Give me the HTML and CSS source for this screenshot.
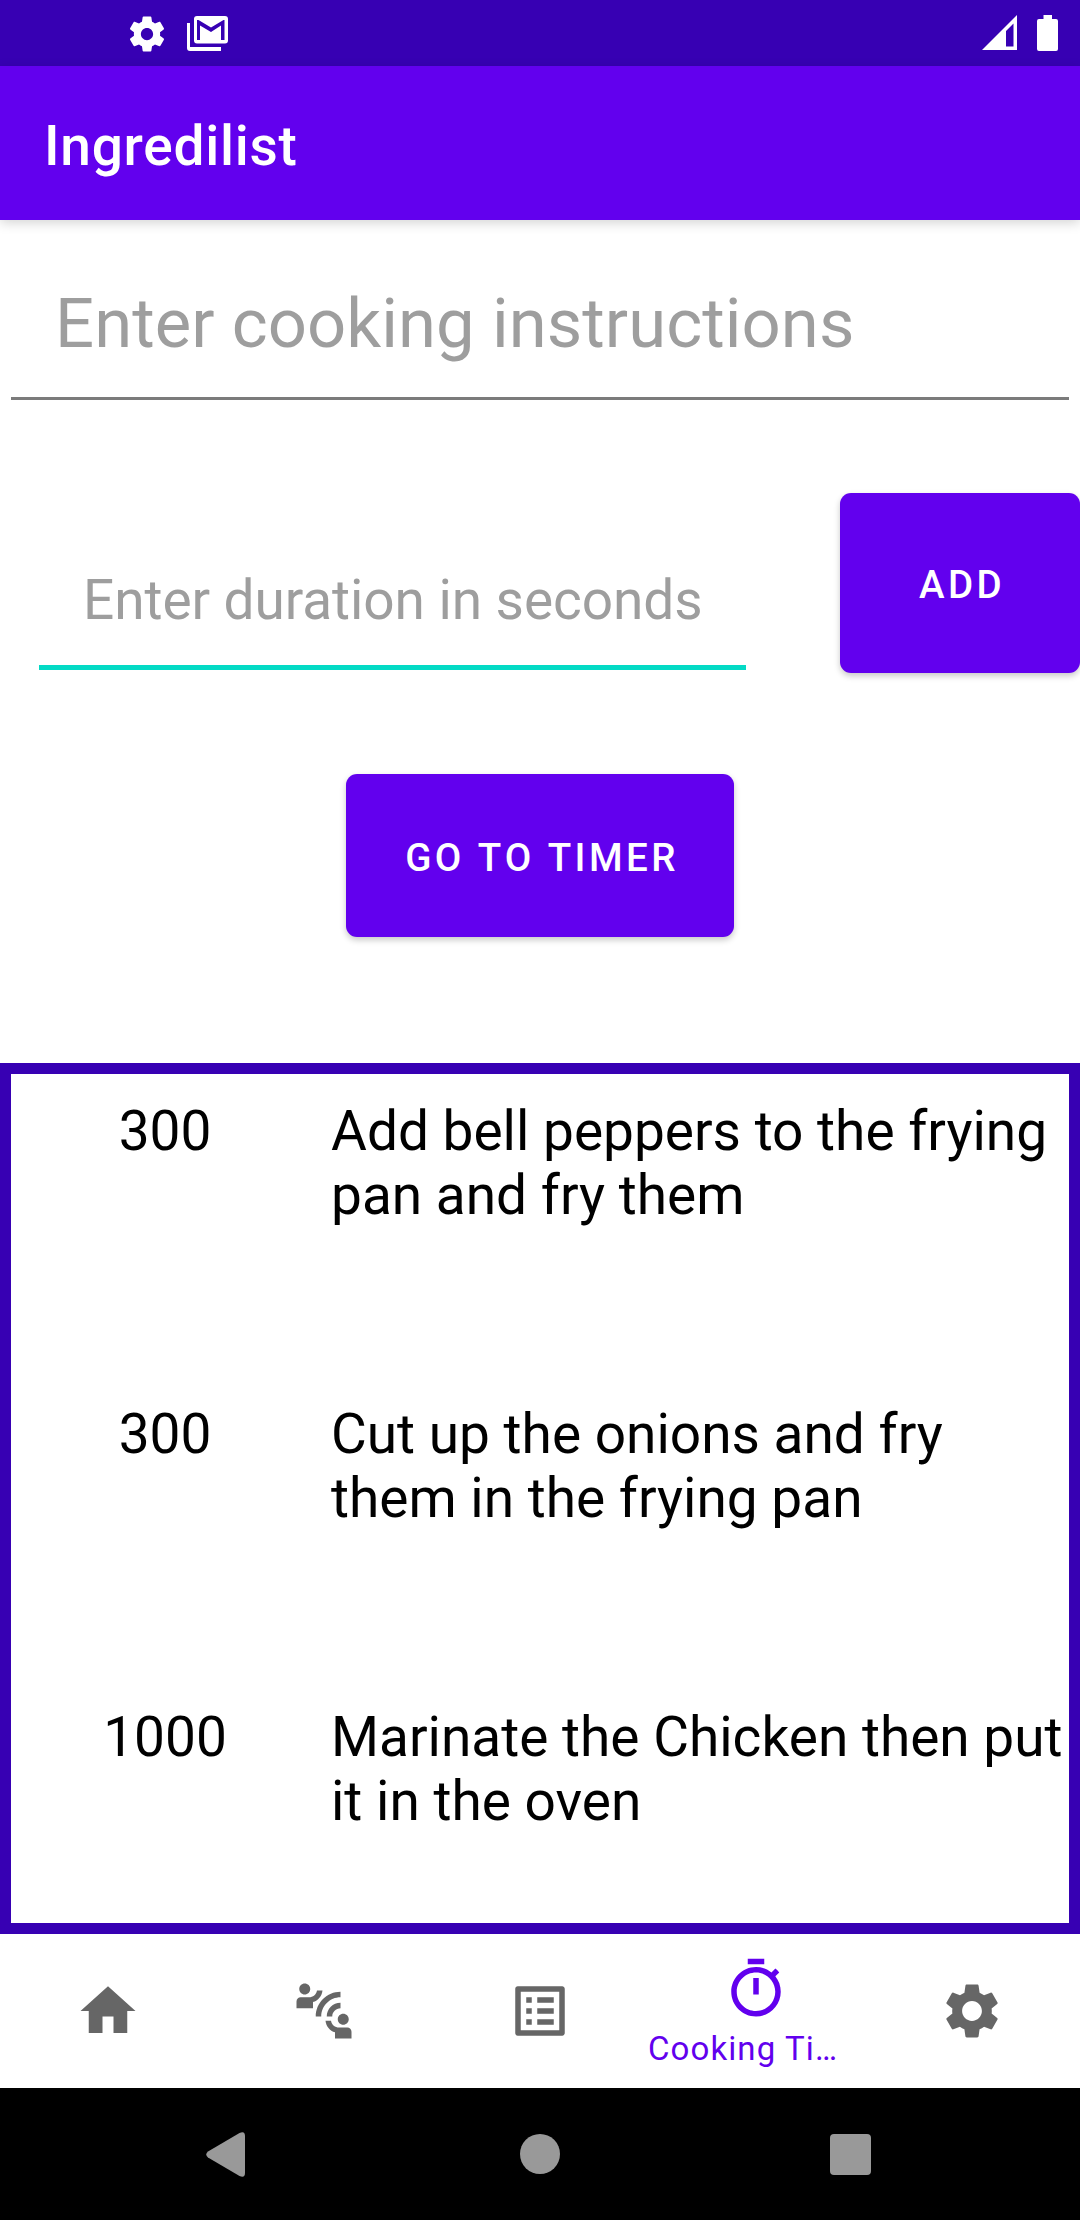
FILE: index.html
```
<!DOCTYPE html>
<html lang="en">
<head>
<meta charset="utf-8">
<title>Ingredilist</title>
<link rel="stylesheet" href="styles.css">
</head>
<body>
<div class="screen">
  <div class="status-bar">
    <div class="status-group">
      <svg class="status-gear" viewBox="0 0 24 24"><path d="M19.43 12.98c.04-.32.07-.64.07-.98s-.03-.66-.07-.98l2.11-1.65c.19-.15.24-.42.12-.64l-2-3.46c-.12-.22-.39-.3-.61-.22l-2.49 1c-.52-.4-1.08-.73-1.69-.98l-.38-2.65C14.46 2.18 14.25 2 14 2h-4c-.25 0-.46.18-.49.42l-.38 2.65c-.61.25-1.17.59-1.69.98l-2.49-1c-.23-.09-.49 0-.61.22l-2 3.46c-.13.22-.07.49.12.64l2.11 1.65c-.04.32-.07.65-.07.98s.03.66.07.98l-2.11 1.65c-.19.15-.24.42-.12.64l2 3.46c.12.22.39.3.61.22l2.49-1c.52.4 1.08.73 1.69.98l.38 2.65c.03.24.24.42.49.42h4c.25 0 .46-.18.49-.42l.38-2.65c.61-.25 1.17-.59 1.69-.98l2.49 1c.23.09.49 0 .61-.22l2-3.46c.12-.22.07-.49-.12-.64l-2.11-1.65zM12 15.5c-1.93 0-3.5-1.57-3.5-3.5s1.57-3.5 3.5-3.5 3.5 1.57 3.5 3.5-1.57 3.5-3.5 3.5z"/></svg>
      <svg class="status-mail" viewBox="0 0 41 35"><path fill-rule="evenodd" d="M10 0h28q3 0 3 3v21.500q0 3-3 3h-28q-3 0-3-3V3q0-3 3-3zM10 4v20h3V9.500l11 6.500 10-6.500V24h3.500V4h-1L24 11.500 11.500 4z"/><path d="M0 7h3v24h31v4H3q-3 0-3-3z"/></svg>
    </div>
    <div class="status-group">
      <svg class="status-signal" viewBox="0 0 35 35"><path fill-rule="evenodd" d="M0 35L35 0v35zM24 16v15.500h7.500V8.500z"/></svg>
      <svg class="status-battery" viewBox="0 0 21 36"><path d="M6.500 0H15v4h4q2 0 2 2v28q0 2-2 2H2q-2 0-2-2V6q0-2 2-2h4.500z"/></svg>
    </div>
  </div>
  <header class="app-bar"><h1 class="app-title">Ingredilist</h1></header>
  <main class="content">
    <div class="field field-instructions">Enter cooking instructions</div>
    <div class="add-row">
      <div class="field field-duration">Enter duration in seconds</div>
      <button class="btn btn-add">ADD</button>
    </div>
    <button class="btn btn-timer">GO TO TIMER</button>
    <div class="steps">
      <div class="step"><div class="step-time">300</div><div class="step-text">Add bell peppers to the frying pan and fry them</div></div>
      <div class="step"><div class="step-time">300</div><div class="step-text">Cut up the onions and fry them in the frying pan</div></div>
      <div class="step"><div class="step-time">1000</div><div class="step-text">Marinate the Chicken then put it in the oven</div></div>
    </div>
  </main>
  <nav class="tabs">
    <div class="tab"><svg class="icon" viewBox="0 0 24 24"><path d="M10 20v-6h4v6h5v-8h3L12 3 2 12h3v8z"/></svg></div>
    <div class="tab"><svg class="icon" viewBox="0 0 24 24"><path d="M11 14H9c0-4.970 4.030-9 9-9v2c-3.870 0-7 3.130-7 7zm7-3V9c-2.760 0-5 2.240-5 5h2c0-1.660 1.340-3 3-3zM7 4c0-1.110-.89-2-2-2s-2 .89-2 2 .89 2 2 2 2-.89 2-2zm4.450.5h-2C9.210 5.920 7.990 7 6.500 7h-3C2.670 7 2 7.670 2 8.500V11h6V8.740c1.860-.59 3.250-2.230 3.450-4.240zM19 17c1.110 0 2-.89 2-2s-.89-2-2-2-2 .89-2 2 .89 2 2 2zm1.500 1h-3c-1.490 0-2.710-1.080-2.950-2.500h-2c.2 2.010 1.590 3.650 3.450 4.240V22h6v-2.500c0-.83-.67-1.500-1.500-1.500z"/></svg></div>
    <div class="tab"><svg class="icon" viewBox="0 0 24 24"><path d="M19 5v14H5V5h14m1.100-2H3.900c-.5 0-.9.4-.9.9v16.200c0 .4.4.9.9.9h16.200c.4 0 .9-.5.9-.9V3.900c0-.5-.5-.9-.9-.9zM11 7h6v2h-6V7zm0 4h6v2h-6v-2zm0 4h6v2h-6zM7 7h2v2H7zm0 4h2v2H7zm0 4h2v2H7z"/></svg></div>
    <div class="tab tab-active"><svg class="icon" viewBox="0 0 24 24"><path d="M15 1H9v2h6V1zm-4 13h2V8h-2v6zm8.030-6.610l1.420-1.420c-.43-.51-.9-.99-1.410-1.410l-1.420 1.420C16.070 4.740 14.120 4 12 4c-4.970 0-9 4.030-9 9s4.020 9 9 9 9-4.030 9-9c0-2.120-.74-4.070-1.970-5.610zM12 20c-3.870 0-7-3.130-7-7s3.130-7 7-7 7 3.130 7 7-3.130 7-7 7z"/></svg><span class="tab-label">Cooking Ti…</span></div>
    <div class="tab"><svg class="icon" viewBox="0 0 24 24"><path d="M19.140,12.940c0.040-0.300,0.060-0.610,0.060-0.940c0-0.320-0.020-0.640-0.070-0.940l2.030-1.580c0.180-0.140,0.230-0.410,0.120-0.610l-1.920-3.320c-0.120-0.220-0.370-0.290-0.590-0.220l-2.390,0.960c-0.500-0.380-1.030-0.700-1.620-0.940L14.400,2.810c-0.040-0.240-0.240-0.410-0.480-0.410h-3.840c-0.240,0-0.430,0.170-0.470,0.410L9.250,5.350C8.660,5.590,8.120,5.920,7.630,6.290L5.240,5.330c-0.220-0.080-0.470,0-0.590,0.220L2.740,8.870C2.620,9.080,2.660,9.340,2.860,9.480l2.030,1.580C4.840,11.360,4.800,11.690,4.800,12s0.020,0.640,0.070,0.940l-2.030,1.580c-0.180,0.140-0.230,0.410-0.120,0.610l1.920,3.320c0.120,0.220,0.370,0.290,0.590,0.220l2.390-0.960c0.500,0.380,1.030,0.700,1.620,0.940l0.360,2.540c0.050,0.240,0.240,0.410,0.480,0.410h3.840c0.240,0,0.440-0.170,0.470-0.410l0.360-2.540c0.590-0.240,1.130-0.560,1.620-0.940l2.390,0.960c0.220,0.080,0.470,0,0.590-0.220l1.920-3.320c0.120-0.220,0.070-0.470-0.120-0.610L19.140,12.940z M12,15.600c-1.980,0-3.600-1.620-3.600-3.600s1.620-3.600,3.600-3.600s3.600,1.620,3.600,3.600S13.980,15.600,12,15.600z"/></svg></div>
  </nav>
  <div class="system-nav">
    <svg class="sys-back" viewBox="0 0 39 45"><path d="M2 19.500L33.500 1Q39-1.500 39 4v37q0 5.500-5.500 3L2 25.500q-3.500-3 0-6z"/></svg>
    <div class="sys-home"></div>
    <div class="sys-recent"></div>
  </div>
</div>
</body>
</html>
```

FILE: styles.css
```
* { box-sizing: border-box; }

body {
  margin: 0;
  background: #fff;
  font-family: Roboto, sans-serif;
}

svg { display: block; fill: currentColor; }

.screen {
  display: flex;
  flex-direction: column;
  width: 1080px;
  height: 2220px;
  overflow: hidden;
}

.status-bar {
  display: flex;
  justify-content: space-between;
  height: 66px;
  padding: 15px 22px 0 125.5px;
  background: #3700b3;
  color: #fff;
}

.status-group { display: flex; }
.status-gear { width: 42px; height: 42px; margin-top: -2.5px; }
.status-mail { width: 41px; height: 35px; margin: 1px 0 0 19.500px; }
.status-signal { width: 35px; height: 35px; }
.status-battery { width: 21px; height: 36px; margin-left: 20px; }

.app-bar {
  display: flex;
  align-items: center;
  height: 154px;
  padding: 6px 44px 0;
  background: #6200ee;
  color: #fff;
  box-shadow: 0 3px 11px rgba(0, 0, 0, .17);
  z-index: 1;
}

.app-title {
  margin: 0;
  font-size: 55px;
  font-weight: 500;
  line-height: 64px;
  letter-spacing: .75px;
}

.content {
  display: flex;
  flex-direction: column;
  height: 1714px;
}

.field { color: #9e9e9e; white-space: nowrap; }

.field-instructions {
  height: 180px;
  margin: 0 11px;
  padding: 64px 44px 0;
  border-bottom: 3px solid #7b7b7b;
  font-size: 68.75px;
  line-height: 80px;
  letter-spacing: .07px;
}

.add-row {
  display: flex;
  justify-content: space-between;
  height: 180px;
  margin: 93px 0 101px 39px;
}

.field-duration {
  width: 707px;
  height: 177px;
  padding: 75px 44px 0;
  border-bottom: 5px solid #03dac5;
  font-size: 55px;
  line-height: 64px;
  letter-spacing: -.08px;
}

.btn {
  flex: none;
  border: 0;
  border-radius: 11px;
  background: #6200ee;
  color: #fff;
  font: 500 38.5px/46px Roboto, sans-serif;
  font-kerning: none;
  letter-spacing: 3.44px;
  box-shadow: 0 3px 6px rgba(0, 0, 0, .22);
}

.btn-add { width: 240px; height: 180px; padding: 4px 0 0 4px; }

.btn-timer {
  align-self: center;
  width: 388px;
  height: 163px;
  padding: 5px 0 0 4px;
}

.steps {
  height: 871px;
  margin-top: 126px;
  border: 11px solid #3700b3;
  overflow: hidden;
}

.step {
  display: grid;
  grid-template-columns: 308px 1fr;
  column-gap: 12px;
  height: 303px;
  padding-top: 25px;
  color: #000;
  font-size: 55px;
  line-height: 64px;
}

.step-time { text-align: center; }

.tabs {
  display: flex;
  height: 154px;
  background: #fff;
  color: #666;
}

.tab {
  display: flex;
  flex: 1;
  flex-direction: column;
  align-items: center;
  justify-content: center;
}

.icon { width: 66px; height: 66px; flex: none; }

.tab-active {
  justify-content: flex-start;
  padding-top: 22px;
  color: #6200ee;
}

.tab-label {
  align-self: stretch;
  margin-top: 7px;
  font-size: 33px;
  line-height: 39px;
  letter-spacing: 1.1px;
  white-space: nowrap;
}

.system-nav {
  display: flex;
  align-items: center;
  justify-content: space-between;
  height: 132px;
  padding: 0 209px 0 206px;
  background: #000;
  color: #999;
}

.sys-back { width: 39px; height: 45px; }
.sys-home { width: 40px; height: 40px; margin-left: 4px; border-radius: 50%; background: #999; }
.sys-recent { width: 41px; height: 41px; border-radius: 4px; background: #999; }
```
